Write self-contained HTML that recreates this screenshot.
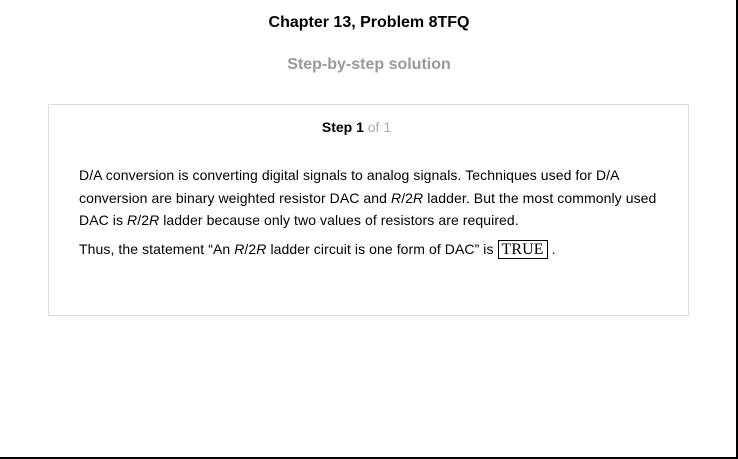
<!DOCTYPE html>
<html><head><style>
html,body{margin:0;padding:0;background:#fff;}
body{width:738px;height:459px;position:relative;overflow:hidden;font-family:"Liberation Sans",Arial,sans-serif;}
.frame{position:absolute;left:0;top:0;width:736px;height:457px;border-right:2px solid #000;border-bottom:2px solid #000;box-sizing:content-box;}
.t{position:absolute;left:0;width:738px;text-align:center;}
h1{font-size:16px;font-weight:bold;margin:0;color:#000;}
.sub{font-size:16px;font-weight:bold;color:#999;}
.box{position:absolute;left:48px;top:104px;width:639px;height:210px;border:1px solid #ddd;}
.step{position:absolute;top:14px;left:-12px;width:100%;text-align:center;font-size:14px;}
.p{position:absolute;left:30px;width:610px;font-size:14px;line-height:22.5px;color:#000;letter-spacing:0.08px;}
.tb{font-family:"Liberation Serif",serif;font-size:16px;border:1px solid #000;padding:0 3px;line-height:17px;display:inline-block;}
</style></head><body>
<div class="frame"></div>
<div class="t" style="top:14px"><h1>Chapter 13, Problem 8TFQ</h1></div>
<div class="t sub" style="top:56px">Step-by-step solution</div>
<div class="box">
<div class="step"><b>Step 1</b> <span style="color:#aaa">of 1</span></div>
<div class="p" style="top:59px">D/A conversion is converting digital signals to analog signals. Techniques used for D/A<br>conversion are binary weighted resistor DAC and <i>R</i>/2<i>R</i> ladder. But the most commonly used<br>DAC is <i>R</i>/2<i>R</i> ladder because only two values of resistors are required.</div>
<div class="p" style="top:133px">Thus, the statement “An <i>R</i>/2<i>R</i> ladder circuit is one form of DAC” is <span class="tb">TRUE</span> .</div>
</div>
</body></html>
